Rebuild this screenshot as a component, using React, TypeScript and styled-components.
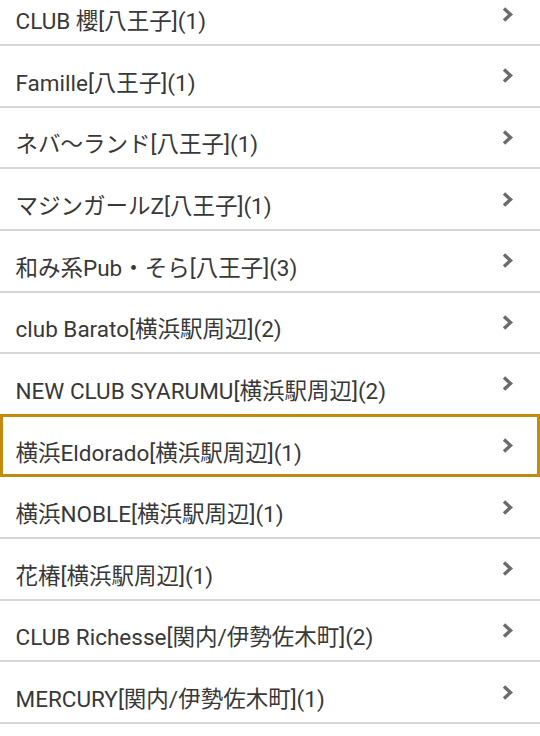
import React from 'react';
import styled, { createGlobalStyle } from 'styled-components';

const GlobalStyle = createGlobalStyle`
  html, body {
    margin: 0;
    padding: 0;
    background: #fff;
  }
  body {
    font-family: Roboto, "Noto Sans CJK JP", sans-serif;
    overflow: hidden;
  }
`;

const shops = [
  'CLUB 櫻[八王子](1)',
  'Famille[八王子](1)',
  'ネバ～ランド[八王子](1)',
  'マジンガールZ[八王子](1)',
  '和み系Pub・そら[八王子](3)',
  'club Barato[横浜駅周辺](2)',
  'NEW CLUB SYARUMU[横浜駅周辺](2)',
  '横浜Eldorado[横浜駅周辺](1)',
  '横浜NOBLE[横浜駅周辺](1)',
  '花椿[横浜駅周辺](1)',
  'CLUB Richesse[関内/伊勢佐木町](2)',
  'MERCURY[関内/伊勢佐木町](1)',
];

const List = styled.ul`
  list-style: none;
  margin: -15.6px 0 0;
  padding: 0;
`;

const Item = styled.li<{ $active?: boolean }>`
  box-sizing: border-box;
  height: 61.64px;
  display: flex;
  align-items: center;
  justify-content: space-between;
  padding: 0 26px 0 15.5px;
  border-bottom: 2px solid #d6d6d6;
  color: #383838;
  font-size: 22.5px;
  ${(p) =>
    p.$active &&
    `
    border: 3px solid #c28b0e;
    margin-top: -2px;
    height: 63.64px;
    padding: 0 23px 0 12.5px;
  `}
`;

const Label = styled.span`
  padding-top: 10px;
`;

const Chevron = () => (
  <svg width="13" height="17" viewBox="0 0 13 17">
    <path d="M3 2.5 L9.5 8.5 L3 14.5" fill="none" stroke="#6b6b6b" strokeWidth="3.4" />
  </svg>
);

export default function App() {
  return (
    <>
      <GlobalStyle />
      <List>
        {shops.map((s, i) => (
          <Item key={s} $active={i === 7}>
            <Label>{s}</Label>
            <Chevron />
          </Item>
        ))}
      </List>
    </>
  );
}
